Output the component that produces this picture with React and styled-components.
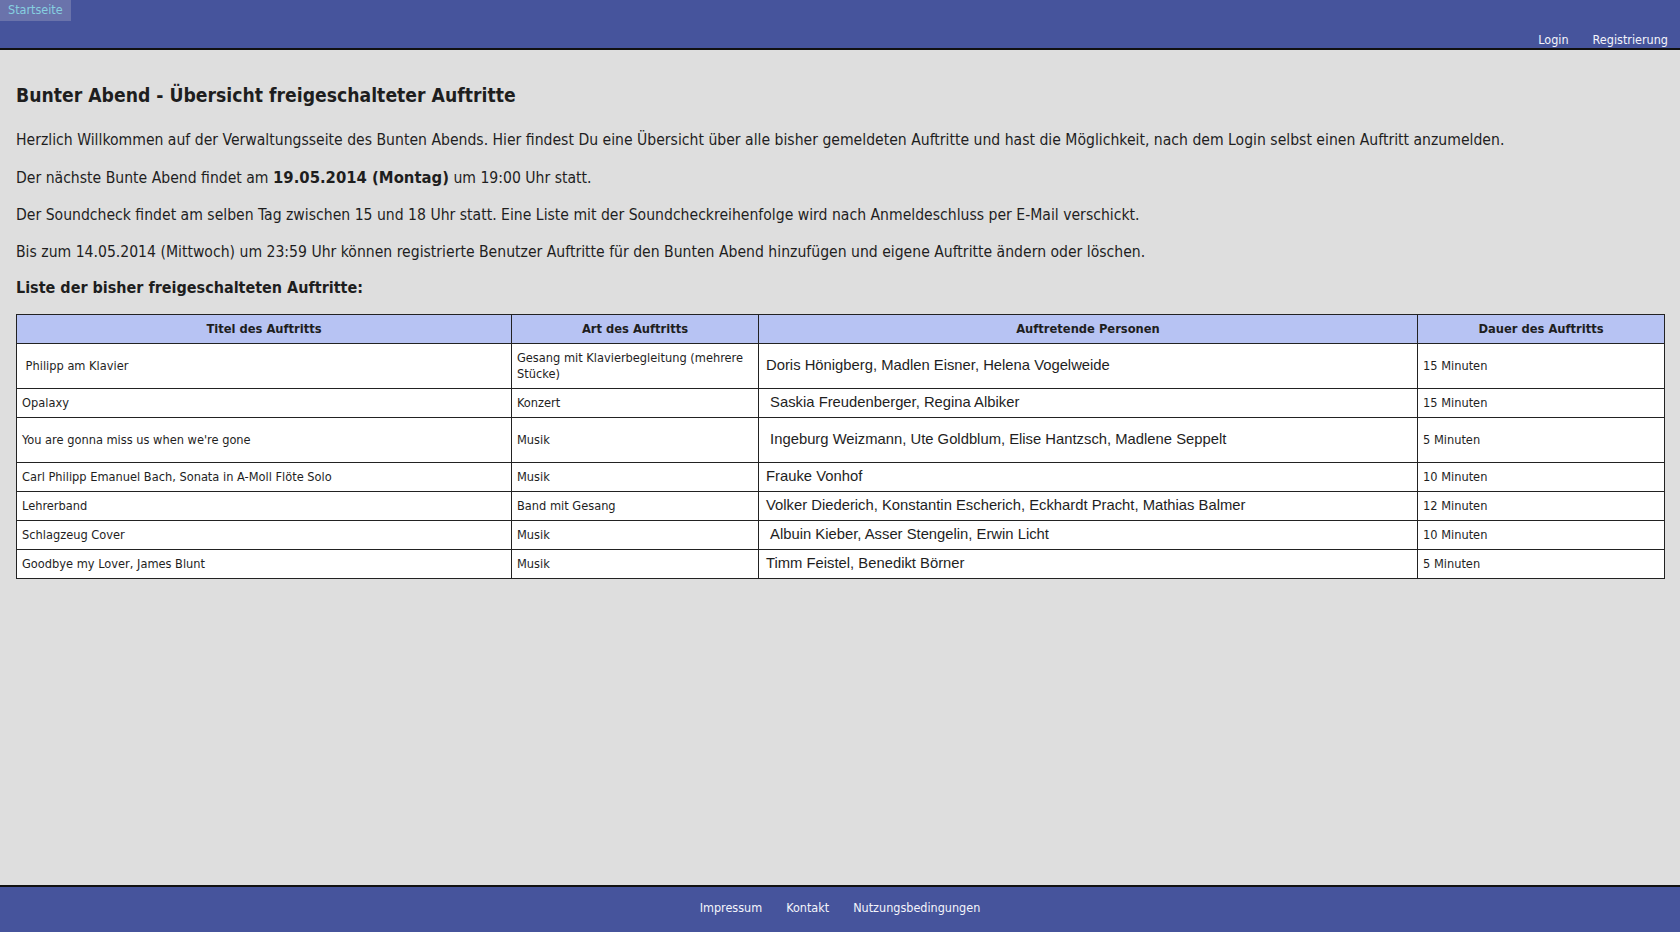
import React from "react";
import styled, { createGlobalStyle } from "styled-components";

const GlobalStyle = createGlobalStyle`
  html, body {
    margin: 0;
    padding: 0;
    background: #dedede;
  }
  body {
    font-family: "DejaVu Sans Condensed", "DejaVu Sans", sans-serif;
    color: #1e1e1e;
  }
  #root {
    min-height: 100vh;
    display: flex;
    flex-direction: column;
  }
`;

const auftritte = [
  { titel: "\u00a0Philipp am Klavier", art: "Gesang mit Klavierbegleitung (mehrere Stücke)", personen: "Doris Hönigberg, Madlen Eisner, Helena Vogelweide", dauer: "15 Minuten" },
  { titel: "Opalaxy", art: "Konzert", personen: "\u00a0Saskia Freudenberger, Regina Albiker", dauer: "15 Minuten" },
  { titel: "You are gonna miss us when we're gone", art: "Musik", personen: "\u00a0Ingeburg Weizmann, Ute Goldblum, Elise Hantzsch, Madlene Seppelt", dauer: "5 Minuten", hoch: true },
  { titel: "Carl Philipp Emanuel Bach, Sonata in A-Moll Flöte Solo", art: "Musik", personen: "Frauke Vonhof", dauer: "10 Minuten" },
  { titel: "Lehrerband", art: "Band mit Gesang", personen: "Volker Diederich, Konstantin Escherich, Eckhardt Pracht, Mathias Balmer", dauer: "12 Minuten" },
  { titel: "Schlagzeug Cover", art: "Musik", personen: "\u00a0Albuin Kieber, Asser Stengelin, Erwin Licht", dauer: "10 Minuten" },
  { titel: "Goodbye my Lover, James Blunt", art: "Musik", personen: "Timm Feistel, Benedikt Börner", dauer: "5 Minuten" },
];

export default function App() {
  return (
    <>
      <GlobalStyle />
      <Header>
        <TopRow>
          <HomeLink href="#">Startseite</HomeLink>
        </TopRow>
        <UserNav>
          <NavLink href="#">Login</NavLink>
          <NavLink href="#">Registrierung</NavLink>
        </UserNav>
      </Header>

      <Main>
        <Title>Bunter Abend - Übersicht freigeschalteter Auftritte</Title>
        <Text>
          Herzlich Willkommen auf der Verwaltungsseite des Bunten Abends. Hier findest Du eine Übersicht über alle bisher gemeldeten Auftritte und hast die Möglichkeit, nach dem Login selbst einen Auftritt anzumelden.
        </Text>
        <Text>
          Der nächste Bunte Abend findet am <strong>19.05.2014 (Montag)</strong> um 19:00 Uhr statt.
        </Text>
        <Text>
          Der Soundcheck findet am selben Tag zwischen 15 und 18 Uhr statt. Eine Liste mit der Soundcheckreihenfolge wird nach Anmeldeschluss per E-Mail verschickt.
        </Text>
        <Text>
          Bis zum 14.05.2014 (Mittwoch) um 23:59 Uhr können registrierte Benutzer Auftritte für den Bunten Abend hinzufügen und eigene Auftritte ändern oder löschen.
        </Text>
        <ListTitle>Liste der bisher freigeschalteten Auftritte:</ListTitle>

        <Table>
          <colgroup>
            <col style={{ width: "495px" }} />
            <col style={{ width: "247px" }} />
            <col style={{ width: "659px" }} />
            <col style={{ width: "247px" }} />
          </colgroup>
          <thead>
            <tr>
              <Th>Titel des Auftritts</Th>
              <Th>Art des Auftritts</Th>
              <Th>Auftretende Personen</Th>
              <Th>Dauer des Auftritts</Th>
            </tr>
          </thead>
          <tbody>
            {auftritte.map((a) => (
              <Row key={a.titel} $hoch={a.hoch}>
                <Td>{a.titel}</Td>
                <Td>{a.art}</Td>
                <PersonTd>{a.personen}</PersonTd>
                <Td>{a.dauer}</Td>
              </Row>
            ))}
          </tbody>
        </Table>
      </Main>

      <Footer>
        <NavLink href="#">Impressum</NavLink>
        <NavLink href="#">Kontakt</NavLink>
        <NavLink href="#">Nutzungsbedingungen</NavLink>
      </Footer>
    </>
  );
}

const Header = styled.header`
  height: 48px;
  background: #46549c;
  border-bottom: 2px solid #111;
  display: flex;
  flex-direction: column;
  justify-content: space-between;
`;

const TopRow = styled.div`
  display: flex;
`;

const HomeLink = styled.a`
  display: block;
  height: 21px;
  line-height: 20px;
  padding: 0 8px;
  background: #6a73ab;
  color: #86cfe0;
  font-size: 12.5px;
  text-decoration: none;
`;

const UserNav = styled.nav`
  display: flex;
  justify-content: flex-end;
  gap: 24px;
  padding: 0 12px 0 0;
`;

const NavLink = styled.a`
  color: #f4f4fb;
  font-size: 12.5px;
  line-height: 16px;
  text-decoration: none;
`;

const Main = styled.main`
  flex: 1;
  padding: 34px 16px 24px;
`;

const Title = styled.h2`
  margin: 0 0 22px;
  font-size: 19.2px;
  line-height: 24px;
  font-weight: bold;
  color: #1e1e1e;
`;

const Text = styled.p`
  margin: 0 0 16px;
  font-size: 15.6px;
  line-height: 21px;

  strong {
    font-size: 16.5px;
  }
`;

const ListTitle = styled.h3`
  margin: 0 0 17px;
  font-size: 16px;
  line-height: 18px;
  font-weight: bold;
`;

const Table = styled.table`
  width: 1648px;
  table-layout: fixed;
  border-collapse: collapse;
  background: #fff;
  border: 1px solid #222;
  font-size: 12.7px;
`;

const Th = styled.th`
  background: #b7c3f3;
  border: 1px solid #222;
  padding: 6px 5px;
  line-height: 16px;
  font-size: 12.8px;
  font-weight: bold;
  text-align: center;
`;

const Row = styled.tr`
  height: ${(p) => (p.$hoch ? "45px" : "auto")};
`;

const Td = styled.td`
  border: 1px solid #222;
  padding: 6px 5px;
  line-height: 16px;
  vertical-align: middle;
`;

const PersonTd = styled(Td)`
  font-family: "Liberation Sans", sans-serif;
  font-size: 14.8px;
  padding-left: 7px;
  padding-bottom: 7px;
  padding-top: 5px;
`;

const Footer = styled.footer`
  height: 47px;
  box-sizing: border-box;
  background: #46549c;
  border-top: 2px solid #111;
  display: flex;
  justify-content: center;
  align-items: center;
  gap: 24px;
  padding-bottom: 4px;
`;
